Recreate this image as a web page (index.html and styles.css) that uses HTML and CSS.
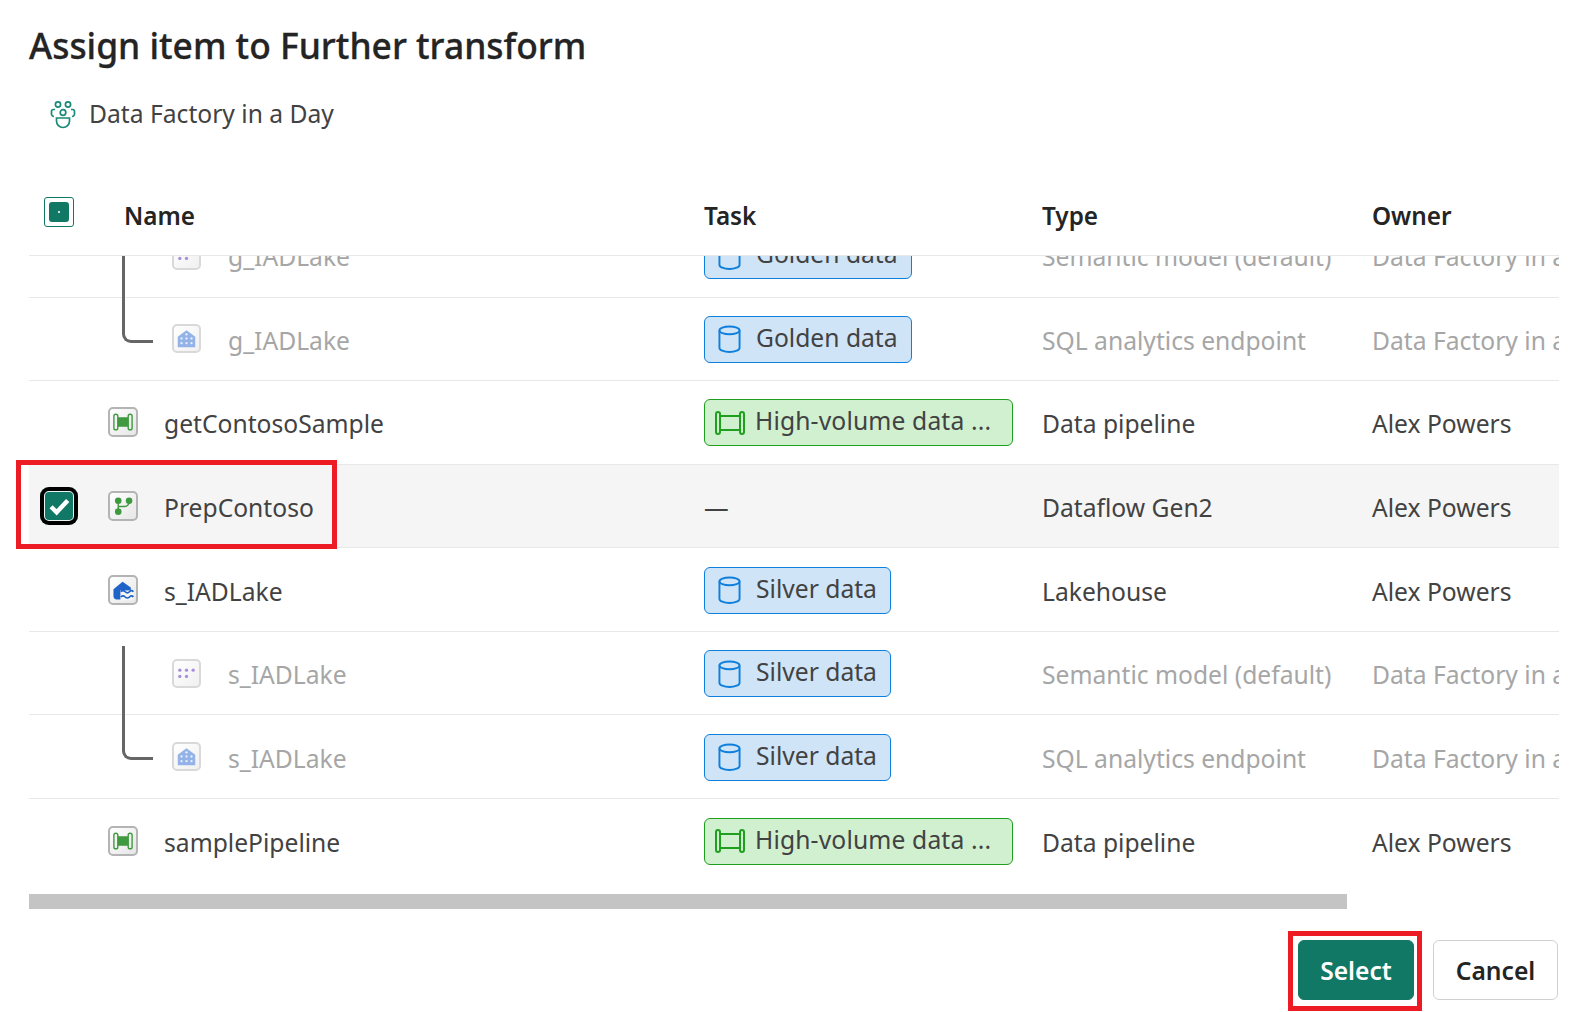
FILE: index.html
```html
<!doctype html>
<html lang="en">
<head>
	<meta charset="UTF-8">
	<title>Assign item to Further transform</title>
	<link rel="stylesheet" href="styles.css">
</head>
<body>
	<div class="page">
		<h1 class="title">Assign item to Further transform</h1>
		<div class="workspace">
			<svg class="ws-icon" viewBox="0 0 26 28" fill="none" stroke="#1a8a78" stroke-width="1.7">
				<circle cx="8" cy="3.5" r="2.6"/>
				<circle cx="18" cy="3.5" r="2.6"/>
				<circle cx="13" cy="11.5" r="2.8"/>
				<path d="M5 8.5H3.5A2 2 0 0 0 1.5 10.500V13A2.500 2.500 0 0 0 4 15.500"/>
				<path d="M21 8.500H22.500A2 2 0 0 1 24.500 10.500V13A2.500 2.500 0 0 1 22 15.500"/>
				<path d="M6.500 17H19.500V20A6.500 6.500 0 0 1 6.500 20Z"/>
			</svg>
			<span>Data Factory in a Day</span>
		</div>

		<div class="row head">
			<div class="check"><span class="check-all"><i></i></span></div>
			<div class="name">Name</div>
			<div>Task</div>
			<div>Type</div>
			<div>Owner</div>
		</div>

		<div class="scroller">
			<div class="rows">
				<div class="row sub line-mid">
					<div class="check"></div>
					<div class="name">
						<span class="item small">
							<svg viewBox="0 0 30 30" fill="#a78fdc"><circle cx="7" cy="11" r="2"/><circle cx="15" cy="11" r="2"/><circle cx="23" cy="11" r="2"/><circle cx="7" cy="18.500" r="2"/><circle cx="15" cy="18.500" r="2"/></svg>
						</span>
						g_IADLake
					</div>
					<div><span class="tag blue"><svg class="tag-icon" viewBox="0 0 24 30" fill="none" stroke="#0f7fdc" stroke-width="2"><ellipse cx="12" cy="6" rx="10.500" ry="4"/><path d="M1.500 6V24C1.500 26.500 6 28.500 12 28.500S22.500 26.500 22.500 24V6"/></svg>Golden data</span></div>
					<div>Semantic model (default)</div>
					<div>Data Factory in a Day</div>
				</div>
				<div class="row sub line-end">
					<div class="check"></div>
					<div class="name">
						<span class="item small">
							<svg viewBox="0 0 30 30"><path d="M4.500 13L15 5L25.500 13V25.500H4.500Z" fill="#93b3e8"/><g fill="#e8eefa"><circle cx="9" cy="15" r="1.400"/><circle cx="15" cy="15" r="1.400"/><circle cx="21" cy="15" r="1.400"/><circle cx="9" cy="20.500" r="1.400"/><circle cx="15" cy="20.500" r="1.400"/><circle cx="21" cy="20.500" r="1.400"/><circle cx="15" cy="10" r="1.400"/></g></svg>
						</span>
						g_IADLake
					</div>
					<div><span class="tag blue"><svg class="tag-icon" viewBox="0 0 24 30" fill="none" stroke="#0f7fdc" stroke-width="2"><ellipse cx="12" cy="6" rx="10.500" ry="4"/><path d="M1.500 6V24C1.500 26.500 6 28.500 12 28.500S22.500 26.500 22.500 24V6"/></svg>Golden data</span></div>
					<div>SQL analytics endpoint</div>
					<div>Data Factory in a Day</div>
				</div>
				<div class="row">
					<div class="check"></div>
					<div class="name">
						<span class="item">
							<svg viewBox="0 0 30 30"><rect x="4.500" y="6" width="4.500" height="18" rx="2.200" fill="none" stroke="#3f9a3f" stroke-width="1.600"/><rect x="21" y="6" width="4.500" height="18" rx="2.200" fill="none" stroke="#3f9a3f" stroke-width="1.600"/><rect x="9" y="9.500" width="12" height="11" fill="#3f9a3f"/></svg>
						</span>
						getContosoSample
					</div>
					<div><span class="tag green"><svg class="tag-icon wide" viewBox="0 0 30 24" fill="none" stroke="#1ea01e" stroke-width="2"><rect x="1" y="1" width="4" height="22" rx="2"/><rect x="25" y="1" width="4" height="22" rx="2"/><path d="M5 5H25M5 19H25"/></svg>High-volume data ...</span></div>
					<div>Data pipeline</div>
					<div>Alex Powers</div>
				</div>
				<div class="row picked">
					<div class="check"><span class="check-on"><svg viewBox="0 0 24 24" fill="none" stroke="#fff" stroke-width="2.800"><path d="M7 12.500L10.500 16L17.500 8.500"/></svg></span></div>
					<div class="name">
						<span class="item">
							<svg viewBox="0 0 30 30" fill="#3f9a3f"><circle cx="9.500" cy="9" r="3.800"/><circle cx="22" cy="9" r="3.800"/><circle cx="9.500" cy="21.500" r="3.800"/><path d="M9.500 9V21.500M9.500 15.500H17A5 5 0 0 0 22 10.500" fill="none" stroke="#3f9a3f" stroke-width="1.600"/></svg>
						</span>
						PrepContoso
					</div>
					<div>—</div>
					<div>Dataflow Gen2</div>
					<div>Alex Powers</div>
				</div>
				<div class="row">
					<div class="check"></div>
					<div class="name">
						<span class="item">
							<svg viewBox="0 0 30 30"><path d="M4 14L14.500 5.500L24 12V26H8A4 4 0 0 1 4 22Z" fill="#1f62c8"/><path d="M12 15.500H27V27H12Z" fill="#f6f6f6"/><path d="M12.500 17Q15 14.500 17.500 17T22.500 17T27 17M12.500 23Q15 20.500 17.500 23T22.500 23T27 23" fill="none" stroke="#1f62c8" stroke-width="1.800"/></svg>
						</span>
						s_IADLake
					</div>
					<div><span class="tag blue"><svg class="tag-icon" viewBox="0 0 24 30" fill="none" stroke="#0f7fdc" stroke-width="2"><ellipse cx="12" cy="6" rx="10.500" ry="4"/><path d="M1.500 6V24C1.500 26.500 6 28.500 12 28.500S22.500 26.500 22.500 24V6"/></svg>Silver data</span></div>
					<div>Lakehouse</div>
					<div>Alex Powers</div>
				</div>
				<div class="row sub line-start">
					<div class="check"></div>
					<div class="name">
						<span class="item small">
							<svg viewBox="0 0 30 30" fill="#a78fdc"><circle cx="7" cy="11" r="2"/><circle cx="15" cy="11" r="2"/><circle cx="23" cy="11" r="2"/><circle cx="7" cy="18.500" r="2"/><circle cx="15" cy="18.500" r="2"/></svg>
						</span>
						s_IADLake
					</div>
					<div><span class="tag blue"><svg class="tag-icon" viewBox="0 0 24 30" fill="none" stroke="#0f7fdc" stroke-width="2"><ellipse cx="12" cy="6" rx="10.500" ry="4"/><path d="M1.500 6V24C1.500 26.500 6 28.500 12 28.500S22.500 26.500 22.500 24V6"/></svg>Silver data</span></div>
					<div>Semantic model (default)</div>
					<div>Data Factory in a Day</div>
				</div>
				<div class="row sub line-end">
					<div class="check"></div>
					<div class="name">
						<span class="item small">
							<svg viewBox="0 0 30 30"><path d="M4.500 13L15 5L25.500 13V25.500H4.500Z" fill="#93b3e8"/><g fill="#e8eefa"><circle cx="9" cy="15" r="1.400"/><circle cx="15" cy="15" r="1.400"/><circle cx="21" cy="15" r="1.400"/><circle cx="9" cy="20.500" r="1.400"/><circle cx="15" cy="20.500" r="1.400"/><circle cx="21" cy="20.500" r="1.400"/><circle cx="15" cy="10" r="1.400"/></g></svg>
						</span>
						s_IADLake
					</div>
					<div><span class="tag blue"><svg class="tag-icon" viewBox="0 0 24 30" fill="none" stroke="#0f7fdc" stroke-width="2"><ellipse cx="12" cy="6" rx="10.500" ry="4"/><path d="M1.500 6V24C1.500 26.500 6 28.500 12 28.500S22.500 26.500 22.500 24V6"/></svg>Silver data</span></div>
					<div>SQL analytics endpoint</div>
					<div>Data Factory in a Day</div>
				</div>
				<div class="row last">
					<div class="check"></div>
					<div class="name">
						<span class="item">
							<svg viewBox="0 0 30 30"><rect x="4.500" y="6" width="4.500" height="18" rx="2.200" fill="none" stroke="#3f9a3f" stroke-width="1.600"/><rect x="21" y="6" width="4.500" height="18" rx="2.200" fill="none" stroke="#3f9a3f" stroke-width="1.600"/><rect x="9" y="9.500" width="12" height="11" fill="#3f9a3f"/></svg>
						</span>
						samplePipeline
					</div>
					<div><span class="tag green"><svg class="tag-icon wide" viewBox="0 0 30 24" fill="none" stroke="#1ea01e" stroke-width="2"><rect x="1" y="1" width="4" height="22" rx="2"/><rect x="25" y="1" width="4" height="22" rx="2"/><path d="M5 5H25M5 19H25"/></svg>High-volume data ...</span></div>
					<div>Data pipeline</div>
					<div>Alex Powers</div>
				</div>
			</div>
		</div>

		<div class="scrollbar"></div>

		<div class="footer">
			<button class="btn primary">Select</button>
			<button class="btn">Cancel</button>
		</div>

		<div class="mark mark-row"></div>
		<div class="mark mark-btn"></div>
	</div>
</body>
</html>
```

FILE: styles.css
```css
*{
	margin:0;
	padding:0;
	box-sizing:border-box;
}
body{
	background:#fff;
	font-family:"Noto Sans","Liberation Sans",sans-serif;
	color:#424242;
}
.page{
	position:relative;
	width:1576px;
	height:1012px;
	padding:20px 17px 0 29px;
	overflow:hidden;
}
.title{
	height:50px;
	line-height:50px;
	font-size:35.4px;
	font-weight:500;
	color:#242424;
	-webkit-text-stroke:0.3px #242424;
}
.workspace{
	display:flex;
	align-items:center;
	height:50px;
	margin-top:20px;
	padding-left:21px;
	gap:13px;
	font-size:24.65px;
}
.workspace span{
	margin-bottom:3px;
}
.ws-icon{
	width:26px;
	height:28px;
}
.row{
	display:grid;
	grid-template-columns:79px 596px 338px 330px 1fr;
	align-items:center;
	height:83.6px;
	padding-top:3px;
	font-size:24.65px;
	white-space:nowrap;
	border-bottom:1.5px solid #e8e8e8;
	position:relative;
}
.head{
	height:80px;
	padding-top:0;
	margin-top:36px;
	font-size:24.3px;
	font-weight:600;
	color:#242424;
}
.head .name{
	padding-left:16px;
}
.check{
	display:flex;
	justify-content:center;
	width:60px;
}
.check-all{
	display:block;
	width:30px;
	height:30px;
	margin-top:-8px;
	padding:4px;
	border:1.5px solid #117865;
	border-radius:3px;
}
.check-all i{
	display:block;
	width:100%;
	height:100%;
	background:radial-gradient(circle,#fff 0.6px,#117865 1.1px);
	border-radius:3px;
}
.check-on{
	display:block;
	width:38px;
	height:38px;
	margin-top:-3px;
	background:#117865;
	border-radius:9px;
	box-shadow:inset 0 0 0 4px #000, inset 0 0 0 5px #e8f5f2;
}
.check-on svg{
	display:block;
	width:100%;
	height:100%;
}
.name{
	display:flex;
	align-items:center;
	gap:26px;
}
.item{
	flex:none;
	width:30px;
	height:30px;
	margin-top:-3px;
	border:2px solid #b4b4b4;
	border-radius:5px;
	background:linear-gradient(135deg,#fff,#e6e6e6);
}
.item svg{
	display:block;
	width:100%;
	height:100%;
}
.sub{
	color:#a6a6a6;
}
.sub .name{
	padding-left:64px;
	gap:27px;
}
.item.small{
	width:29px;
	height:29px;
	border-color:#d9d9d9;
	background:linear-gradient(135deg,#fff,#f0f0f0);
}
.picked{
	background:#f5f5f5;
}
.scroller{
	height:625px;
	overflow:hidden;
}
.rows{
	margin-top:-42.1px;
}
.last{
	border-bottom:none;
}
.tag{
	display:inline-flex;
	align-items:center;
	height:47px;
	margin-top:-2px;
	padding:0 13px 4px;
	gap:15px;
	border:1.5px solid;
	border-radius:6px;
	font-size:24.65px;
	color:#424242;
	vertical-align:middle;
}
.tag.blue{
	background:#cfe4f7;
	border-color:#0f7fdc;
}
.tag.green{
	background:#d0f0d0;
	border-color:#1ea01e;
	padding:0 21px 4px 10px;
	gap:10px;
	letter-spacing:0.15px;
}
.tag-icon{
	width:23px;
	height:30px;
	margin-bottom:-4px;
}
.tag-icon.wide{
	width:30px;
	height:24px;
}
.line-mid::before,
.line-start::before{
	content:"";
	position:absolute;
	left:93px;
	bottom:-1.5px;
	width:3px;
	background:#666;
}
.line-mid::before{
	top:0;
}
.line-start::before{
	top:14px;
}
.line-end::before{
	content:"";
	position:absolute;
	left:93px;
	top:0;
	width:28px;
	height:42px;
	border-left:3px solid #666;
	border-bottom:3px solid #666;
	border-bottom-left-radius:9px;
}
.scrollbar{
	width:1318px;
	height:15px;
	margin-top:13px;
	background:#c4c4c4;
}
.footer{
	display:flex;
	justify-content:flex-end;
	gap:19px;
	margin-top:31px;
	padding-right:1px;
}
.btn{
	width:125px;
	height:60px;
	border:1.5px solid #d1d1d1;
	border-radius:6px;
	background:#fff;
	font-family:inherit;
	font-size:24.65px;
	font-weight:600;
	color:#242424;
}
.btn.primary{
	width:116px;
	background:#117865;
	border-color:#117865;
	color:#fff;
}
.mark{
	position:absolute;
	border:5px solid #ed1c24;
}
.mark-row{
	left:16px;
	top:460px;
	width:321px;
	height:89px;
}
.mark-btn{
	left:1288px;
	top:931px;
	width:134px;
	height:80px;
}
```
